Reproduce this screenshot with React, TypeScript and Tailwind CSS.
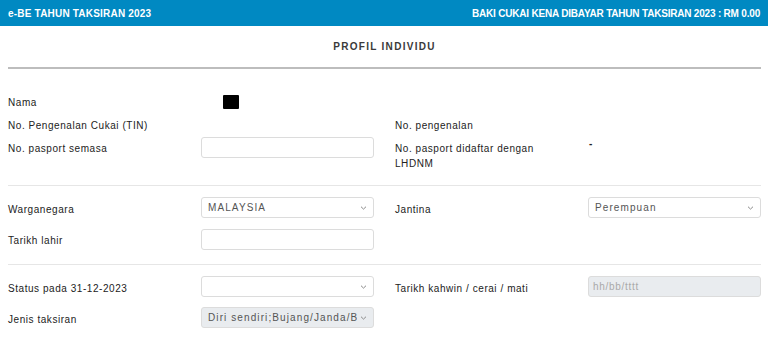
import React from 'react';

const font = { fontFamily: '"Liberation Sans", Arial, sans-serif' };

function Chevron() {
  return (
    <svg width="7" height="5" viewBox="0 0 7 5" className="absolute right-[6px] top-1/2 -translate-y-1/2">
      <path d="M1 1.2 L3.5 3.6 L6 1.2" fill="none" stroke="#8a8a8a" strokeWidth="1" />
    </svg>
  );
}

function Select({ value, disabled }: { value: string; disabled?: boolean }) {
  return (
    <div
      className={`relative h-[21px] w-full rounded-[3px] border border-[#dcdcdc] ${disabled ? 'bg-[#e9ecef]' : 'bg-white'} pl-[6px] pr-[16px] flex items-center text-[10px] tracking-[1.1px] text-[#555]`}
    >
      <span className="whitespace-nowrap overflow-hidden">{value}</span>
      <Chevron />
    </div>
  );
}

function Input({ placeholder, disabled }: { placeholder?: string; disabled?: boolean }) {
  return (
    <div
      className={`h-[21px] w-full rounded-[3px] border border-[#dcdcdc] ${disabled ? 'bg-[#e9ecef]' : 'bg-white'} px-[4px] flex items-center text-[10px] tracking-[0.7px] text-[#a9a9a9]`}
    >
      {placeholder}
    </div>
  );
}

export default function App() {
  return (
    <div className="w-[768px] h-[337px] bg-white overflow-hidden" style={font}>
      {/* Header */}
      <header className="h-[26px] bg-[#0089c2] flex items-center justify-between px-[8px] text-white font-bold text-[10px]">
        <span className="tracking-[0.2px]">e-BE TAHUN TAKSIRAN 2023</span>
        <span className="tracking-[-0.2px]">BAKI CUKAI KENA DIBAYAR TAHUN TAKSIRAN 2023 : RM 0.00</span>
      </header>

      <div className="px-[8px] pr-[7px]">
        <h2 className="text-center font-bold text-[10px] tracking-[1.3px] text-[#3a3a3a] pt-[13px] h-[41px]">PROFIL INDIVIDU</h2>
        <div className="h-[2px] bg-[#bdbdbd]" />

        {/* Identity section */}
        <div className="grid grid-cols-[193px_173px_21px_193px_173px] text-[10px] tracking-[0.55px] text-[#222] pt-[21px]">
          <div className="h-[24px] flex items-center">Nama</div>
          <div className="h-[24px] flex items-center">
            <div className="ml-[22px] w-[16px] h-[14px] bg-black rounded-[1px]" />
          </div>
          <div />
          <div />
          <div />

          <div className="h-[23px] flex items-center">No. Pengenalan Cukai (TIN)</div>
          <div />
          <div />
          <div className="h-[23px] flex items-center">No. pengenalan</div>
          <div />

          <div className="h-[22px] flex items-center self-start">No. pasport semasa</div>
          <div className="self-start"><Input /></div>
          <div />
          <div className="leading-[15px] pt-[4px]">No. pasport didaftar dengan<br />LHDNM</div>
          <div className="pt-[2px] pl-[1px] leading-[10px] font-bold">-</div>
        </div>

        <div className="h-px bg-[#e6e6e6] mt-[14px]" />

        {/* Citizenship section */}
        <div className="grid grid-cols-[193px_173px_21px_193px_173px] gap-y-[11px] text-[10px] tracking-[0.55px] text-[#222] pt-[11px]">
          <div className="h-[21px] flex items-center pt-[3px]">Warganegara</div>
          <Select value="MALAYSIA" />
          <div />
          <div className="h-[21px] flex items-center pt-[3px]">Jantina</div>
          <Select value="Perempuan" />

          <div className="h-[21px] flex items-center pt-[2px]">Tarikh lahir</div>
          <Input />
          <div />
          <div />
          <div />
        </div>

        <div className="h-px bg-[#e6e6e6] mt-[14px]" />

        {/* Status section */}
        <div className="grid grid-cols-[193px_173px_21px_193px_173px] gap-y-[10px] text-[10px] tracking-[0.55px] text-[#222] pt-[11px]">
          <div className="h-[21px] flex items-center pt-[3px]">Status pada 31-12-2023</div>
          <Select value="" />
          <div />
          <div className="h-[21px] flex items-center pt-[3px]">Tarikh kahwin / cerai / mati</div>
          <Input placeholder="hh/bb/tttt" disabled />

          <div className="h-[21px] flex items-center pt-[3px]">Jenis taksiran</div>
          <Select value="Diri sendiri;Bujang/Janda/B" disabled />
          <div />
          <div />
          <div />
        </div>
      </div>
    </div>
  );
}
